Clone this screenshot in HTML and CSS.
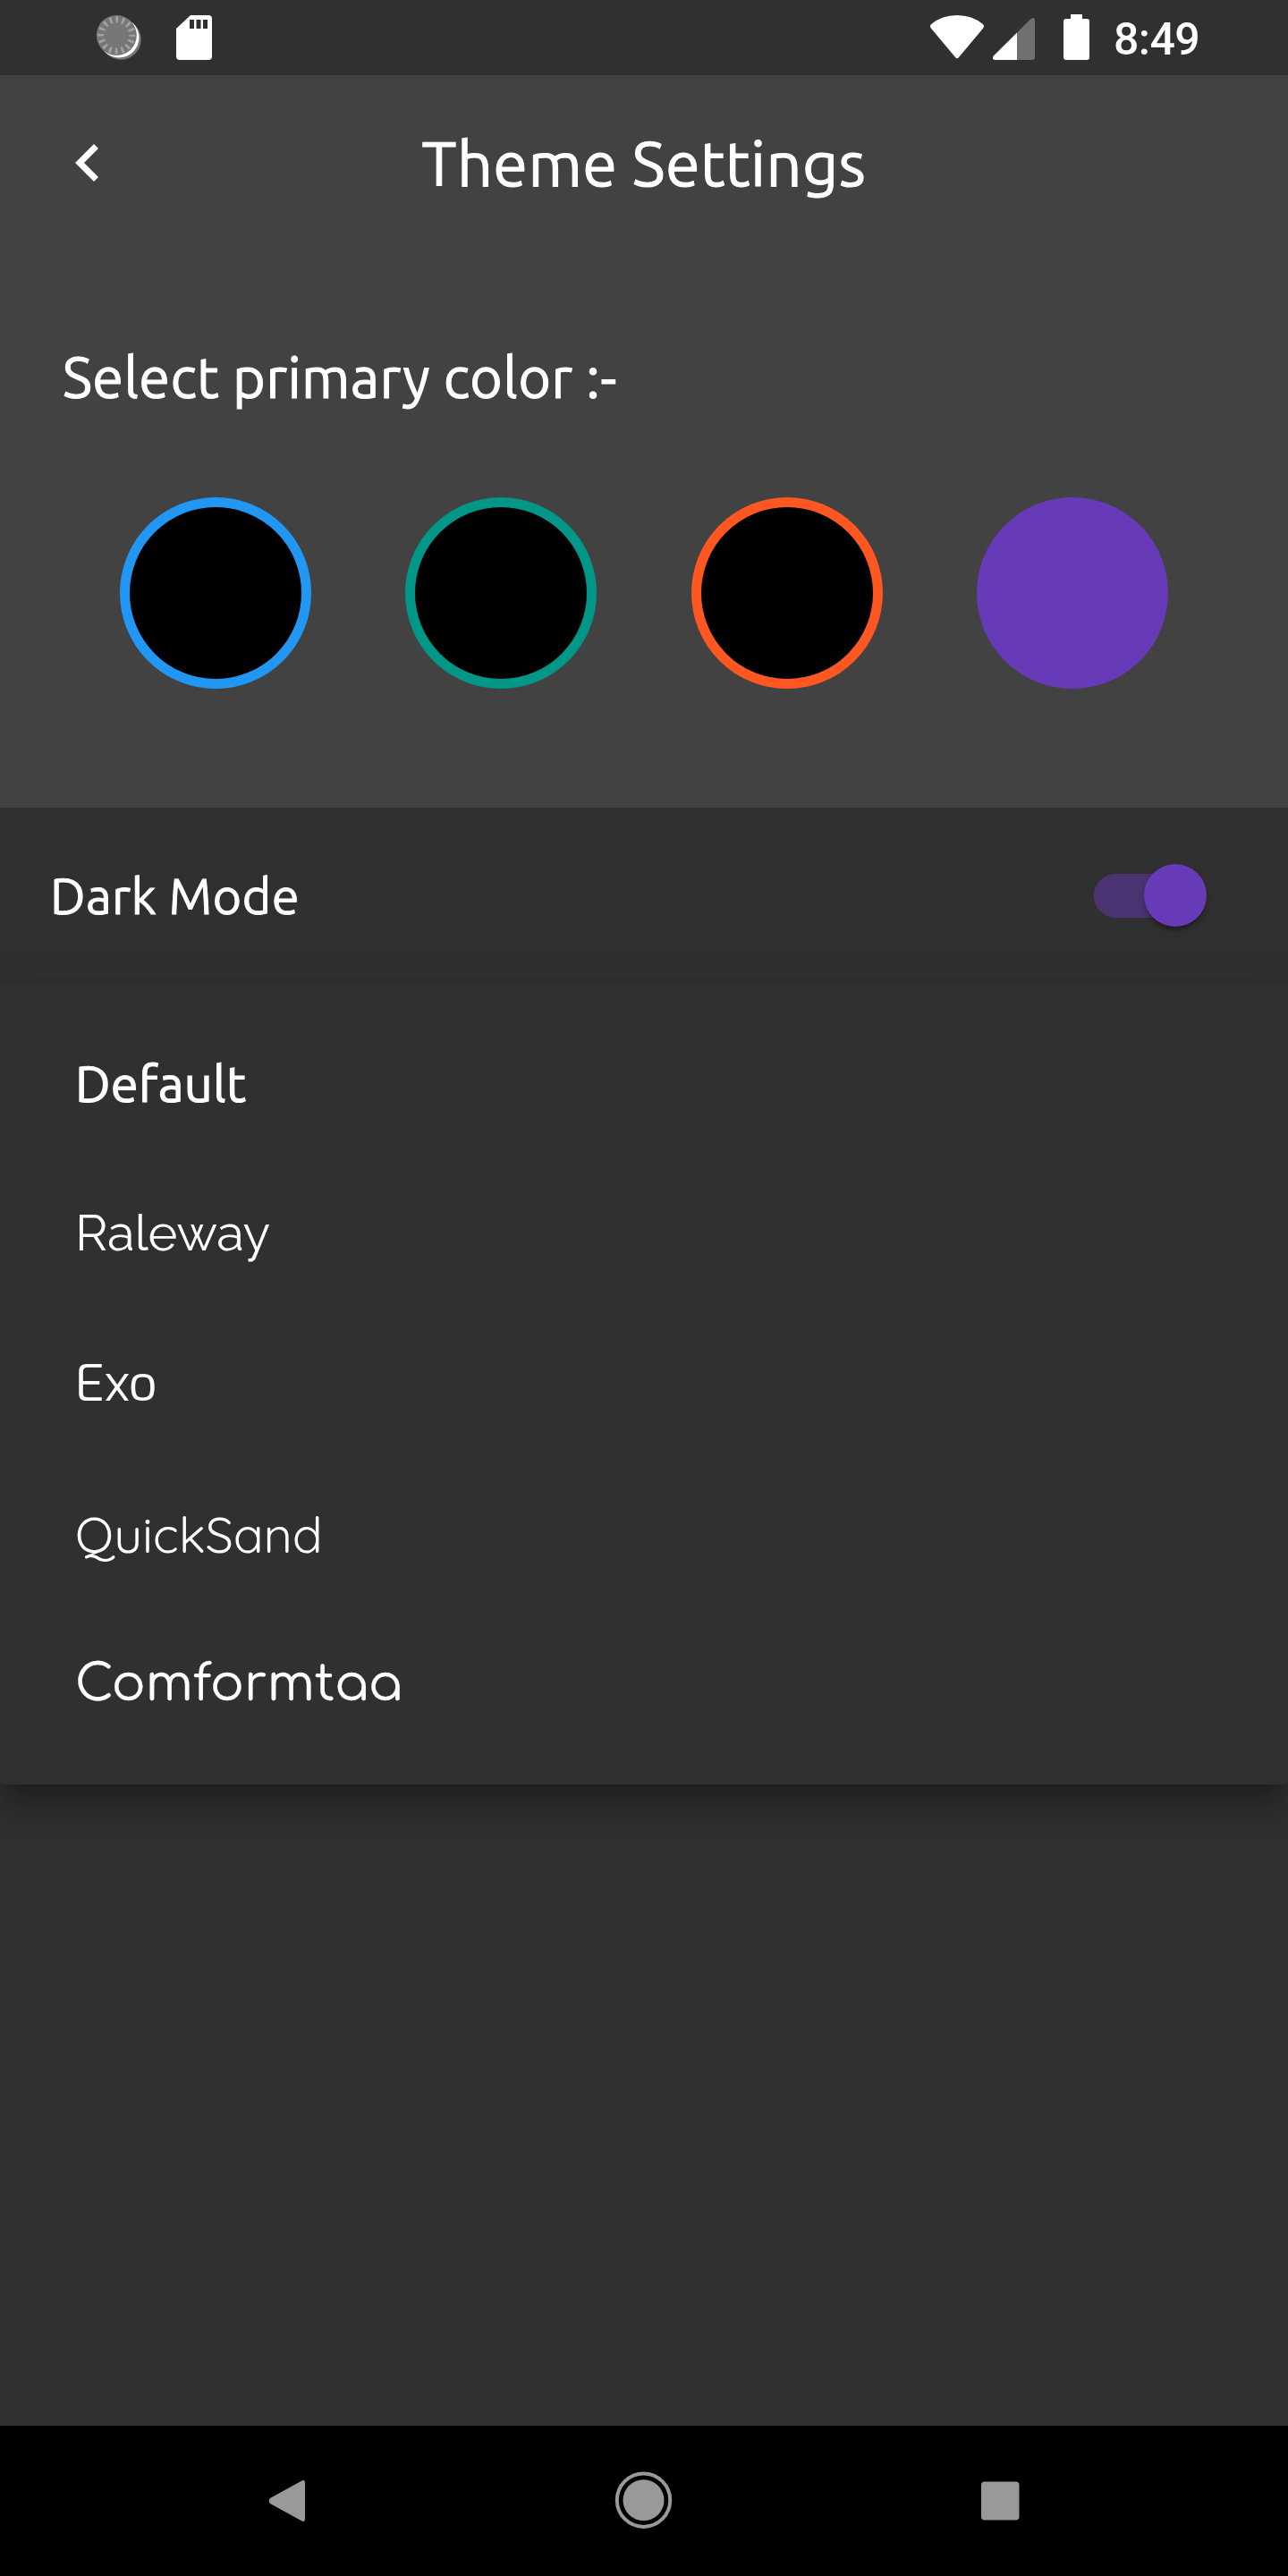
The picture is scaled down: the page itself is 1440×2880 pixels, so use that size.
FILE: index.html
```html
<!DOCTYPE html>
<html lang="en">
<head>
<meta charset="utf-8">
<title>Theme Settings</title>
<link rel="stylesheet" href="styles.css">
</head>
<body>
<div class="screen">
  <header class="status">
    <svg class="status-left" width="260" height="84" viewBox="0 0 260 84">
      <circle cx="135.200" cy="44.200" r="22.500" fill="#777"/>
      <circle cx="133" cy="42" r="22.500" fill="#fff"/>
      <circle cx="130.300" cy="39.500" r="22.500" fill="#777"/>
      <circle cx="130.300" cy="39.500" r="17.500" fill="none" stroke="#a2a2a2" stroke-width="7" stroke-dasharray="2.600 4.272" stroke-dashoffset="1.300"/>
      <path d="M213 17h20a4 4 0 0 1 4 4v42a4 4 0 0 1-4 4h-32a4 4 0 0 1-4-4V32z" fill="#fff"/>
      <path d="M212 22h5v10h-5zM219.500 22h5v10h-5zM227 22h5v10h-5z" fill="#303030"/>
    </svg>
    <div class="status-right">
      <svg width="182" height="84" viewBox="1038 0 182 84">
        <path d="M1041.200 27Q1053 17 1070 17T1098.800 27Q1101 29 1099.200 31.500L1072 64Q1070 66.500 1068 64L1040.800 31.500Q1039 29 1041.200 27z" fill="#fff"/>
        <path d="M1137 36.500L1152.500 21Q1157 18 1157 23V64Q1157 67 1154 67H1137z" fill="#707070"/>
        <path d="M1137 36.500V67H1112.500Q1108.500 66.500 1110.500 62.800z" fill="#fff"/>
        <path d="M1197 16h13v5h5a3 3 0 0 1 3 3v40a3 3 0 0 1-3 3h-23a3 3 0 0 1-3-3V24a3 3 0 0 1 3-3h5z" fill="#fff"/>
      </svg>
      <span class="clock">8:49</span>
    </div>
  </header>

  <section class="primary">
    <div class="appbar">
      <svg class="back" width="28" height="44" viewBox="0 0 28 44"><path d="M24.500 3.500L6 22L24.500 40.500" fill="none" stroke="#fff" stroke-width="7"/></svg>
      <h1 class="title">Theme Settings</h1>
    </div>
    <h2 class="heading">Select primary color :-</h2>
    <div class="swatches">
      <span class="swatch blue"></span>
      <span class="swatch teal"></span>
      <span class="swatch orange"></span>
      <span class="swatch purple"></span>
    </div>
  </section>

  <section class="dark-row">
    <span class="dark-label">Dark Mode</span>
    <span class="switch"><span class="thumb"></span></span>
  </section>

  <ul class="menu">
    <li class="item ubuntu">Default</li>
    <li class="item raleway">Raleway</li>
    <li class="item exo">Exo</li>
    <li class="item quicksand">QuickSand</li>
    <li class="item comfortaa">Comformtaa</li>
  </ul>

  <nav class="nav">
    <svg width="1440" height="168" viewBox="0 2712 1440 168" fill="#999">
      <path d="M336.500 2774L302 2793Q299.500 2796 302 2799L336.500 2818Q341 2820.500 341 2816V2776Q341 2771.500 336.500 2774z"/>
      <circle cx="719.500" cy="2795.200" r="23"/>
      <circle cx="719.500" cy="2795.200" r="29.700" fill="none" stroke="#999" stroke-width="4"/>
      <rect x="1097" y="2774.500" width="42.500" height="43" rx="4"/>
    </svg>
  </nav>
</div>
</body>
</html>
```
FILE: styles.css
```css
* { box-sizing: border-box; }
body {
  margin: 0;
  background: #303030;
  color: #fff;
  font-family: Ubuntu, "Noto Sans", sans-serif;
}
.screen {
  width: 1440px;
  height: 2880px;
  display: flex;
  flex-direction: column;
  overflow: hidden;
  white-space: nowrap;
}
svg { display: block; }

.status {
  height: 84px;
  display: flex;
  justify-content: space-between;
}
.status-right {
  display: flex;
  gap: 25px;
  width: 402px;
}
.clock {
  font: 500 50px/84px Roboto, sans-serif;
  letter-spacing: -.6px;
  padding-top: 2px;
}

.primary {
  height: 819px;
  background: #424242;
}
.appbar {
  height: 196px;
  display: grid;
  grid-template-columns: 84px 1fr 84px;
  align-items: center;
}
.back { grid-column: 1; margin-left: 83px; }
.title {
  grid-column: 2;
  margin: 0;
  text-align: center;
  font-size: 70px;
  line-height: 84px;
  font-weight: 400;
  letter-spacing: .45px;
  -webkit-text-stroke: 1px #fff;
}
.heading {
  margin: 100px 0 92px 70px;
  font-size: 63px;
  line-height: 84px;
  font-weight: 400;
  letter-spacing: .35px;
  -webkit-text-stroke: 1px #fff;
}
.swatches {
  display: flex;
  justify-content: space-around;
  padding: 0 81px;
}
.swatch {
  width: 214px;
  height: 214px;
  border-radius: 50%;
  border: 11px solid;
  background: #000;
}
.blue { border-color: #2196f3; }
.teal { border-color: #009688; }
.orange { border-color: #ff5722; }
.purple { border-color: #673ab7; background: #673ab7; }

.dark-row {
  height: 196px;
  display: flex;
  align-items: center;
  justify-content: space-between;
  padding: 0 91px 0 56px;
}
.dark-label {
  font-size: 56px;
  line-height: 84px;
  padding-top: 2px;
  letter-spacing: .35px;
  -webkit-text-stroke: .8px #fff;
}
.switch {
  width: 126px;
  height: 49px;
  display: flex;
  align-items: center;
  justify-content: flex-end;
  border-radius: 25px;
  background: linear-gradient(#4c3473, #4c3473) left / 100px no-repeat;
}
.thumb {
  width: 70px;
  height: 70px;
  flex: none;
  border-radius: 50%;
  background: #673ab7;
  box-shadow: 0 7px 4px -4px rgba(0,0,0,.2), 0 4px 4px rgba(0,0,0,.14), 0 4px 11px rgba(0,0,0,.12);
}

.menu {
  height: 896px;
  margin: 0;
  padding: 28px 0;
  list-style: none;
  border-radius: 7px;
  background: #303030;
  box-shadow: 0 18px 18px -11px rgba(0,0,0,.2), 0 28px 35px 3px rgba(0,0,0,.14), 0 11px 49px 7px rgba(0,0,0,.12);
}
.item {
  height: 168px;
  padding-left: 84px;
  line-height: 168px;
  font-size: 56px;
  font-weight: 400;
}
.ubuntu { line-height: 170px; letter-spacing: .3px; -webkit-text-stroke: 1.1px #fff; }
.raleway { font-family: Raleway, Lato, sans-serif; line-height: 166px; letter-spacing: -.1px; }
.exo { font-family: Exo, "Noto Sans", sans-serif; }
.quicksand { font-family: Quicksand, Lato, sans-serif; letter-spacing: -.15px; }
.comfortaa { font-family: Comfortaa, Lato, sans-serif; -webkit-text-stroke: .3px #fff; }

.nav {
  height: 168px;
  margin-top: auto;
  background: #000;
}
```
